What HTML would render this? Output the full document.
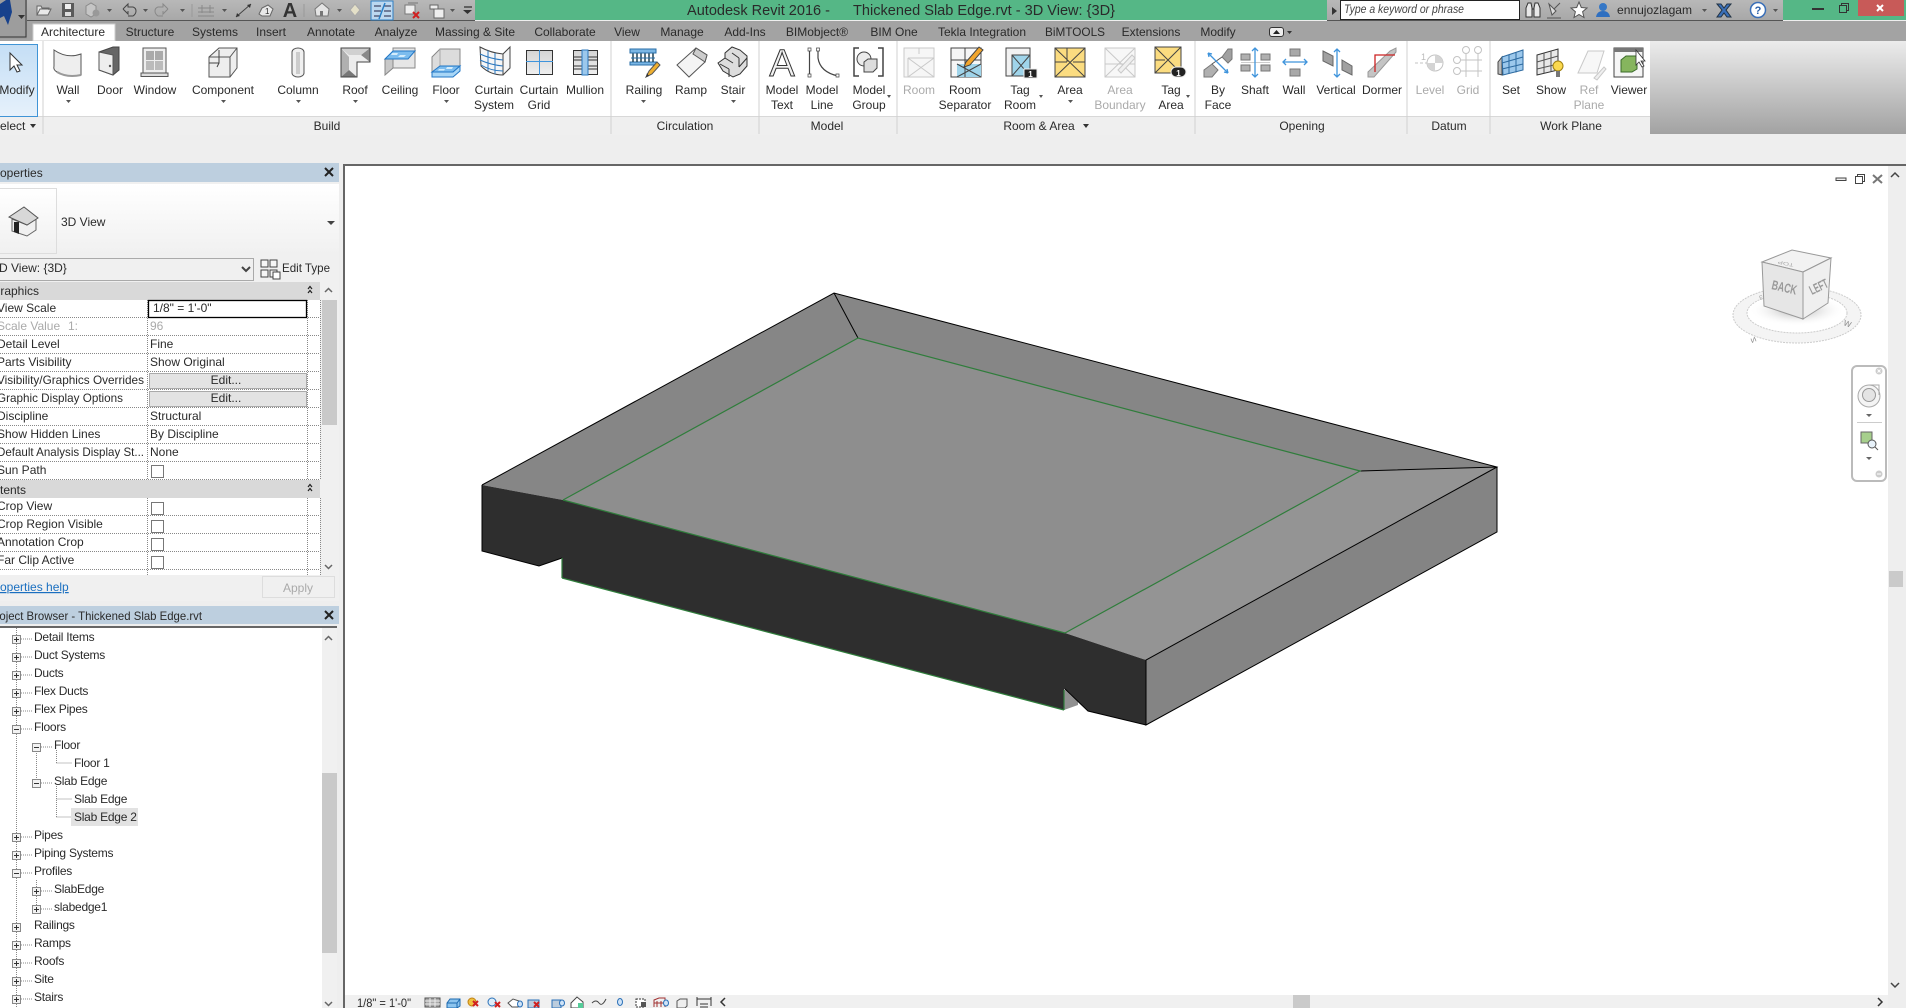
<!DOCTYPE html>
<html><head><meta charset="utf-8"><title>Autodesk Revit 2016</title>
<style>
html,body{margin:0;padding:0;width:1906px;height:1008px;overflow:hidden;background:#eee}
svg{display:block;position:absolute;left:0;top:0}
text{font-family:"Liberation Sans",sans-serif;font-size:12px;fill:#2a2a2a}
.m{text-anchor:middle}
.f{fill:#aaa}
.d{stroke:#888;stroke-width:1;stroke-dasharray:1 1;fill:none}
.b{fill:#f2f2f2;stroke:#666;stroke-width:1}
.c{fill:#fff;stroke:#777;stroke-width:1}
.i{fill:#eee;stroke:#555;stroke-width:1}
.l{fill:none;stroke:#444;stroke-width:1}
.s{fill:#555}
.e{fill:none;stroke:#000;stroke-width:1}
.g{fill:none;stroke:#2f7d3b;stroke-width:1.2}
.x{fill:none;stroke:#222;stroke-width:2}
.tree text{letter-spacing:-.25px}
</style></head><body>
<svg width="1906" height="1008" viewBox="0 0 1906 1008" xmlns="http://www.w3.org/2000/svg">
<defs>
<linearGradient id="gr" x1="0" y1="0" x2="0" y2="1"><stop offset="0" stop-color="#ececec"/><stop offset="1" stop-color="#a2a2a2"/></linearGradient>
<linearGradient id="qg" x1="0" y1="0" x2="0" y2="1"><stop offset="0" stop-color="#b8b8b8"/><stop offset="1" stop-color="#a8a8a8"/></linearGradient>
<linearGradient id="mg" x1="0" y1="0" x2="0" y2="1"><stop offset="0" stop-color="#c4def5"/><stop offset="1" stop-color="#e6f1fb"/></linearGradient>
<linearGradient id="tg" x1="0" y1="0" x2="0" y2="1"><stop offset="0" stop-color="#fff"/><stop offset="1" stop-color="#f0f0f0"/></linearGradient>
<linearGradient id="gg" x1="0" y1="0" x2="0" y2="1"><stop offset="0" stop-color="#d4d4d4"/><stop offset="1" stop-color="#efefef"/></linearGradient>
<radialGradient id="sh"><stop offset="0" stop-color="#aaa"/><stop offset="1" stop-color="#fff" stop-opacity="0"/></radialGradient>
</defs>
<rect width="1906" height="1008" fill="#eeeeee"/>

<!-- title bar -->
<rect width="1906" height="20" fill="#55b786"/>
<rect x="26" y="0" width="449" height="20" fill="url(#qg)"/>
<rect x="26" y="20" width="449" height="1" fill="#555"/>
<rect x="1327" y="0" width="456" height="20" fill="url(#qg)"/>
<rect x="1327" y="20" width="456" height="1" fill="#555"/>
<rect x="0" y="21" width="1906" height="20" fill="#a3a3a3"/>
<rect x="0" y="0" width="27" height="39" fill="#9d9d9d"/>
<path d="M26 0V37H0" fill="none" stroke="#333"/>
<path d="M0 4L6 0H10L12 12L8 25L4 16L0 18Z" fill="#17418c"/>
<path d="M18 15h7l-3.500 4z" fill="#333"/>

<!-- QAT icons -->
<path d="M37 15V6h4l1 2h7v2M37 15l3-6h11l-3 6z" fill="#e8e8e8" stroke="#666"/>
<path d="M62 3h12v14H62z" fill="#5a5a5a"/><rect x="65" y="4" width="6" height="5" fill="#eee"/><rect x="65" y="12" width="6" height="4" fill="#ddd"/>
<path d="M86 6l5-3 5 3v8l-5 3-5-3z" fill="#c5c5c5" stroke="#8a8a8a"/><circle cx="96" cy="13" r="3.500" fill="#999"/>
<path d="M107 9h5l-2.500 3z" class="s"/>
<path d="M123 9l5-5v3h5q3 1 3 4t-3 5h-5" class="l" stroke-width="1.300"/><path d="M123 9l5 5v-3" class="l"/>
<path d="M143 9h5l-2.500 3z" class="s"/>
<path d="M168 9l-5-5v3h-5q-3 1-3 4t3 5h5" fill="none" stroke="#888"/><path d="M168 9l-5 5v-3" fill="none" stroke="#888"/>
<path d="M180 9h5l-2.500 3z" class="s"/>
<path d="M192 4v13" stroke="#999"/>
<path d="M198 8h16M198 12h16M198 16h16M202 5v8M210 5v8" fill="none" stroke="#888"/>
<path d="M222 9h5l-2.500 3z" class="s"/>
<path d="M236 17L251 4" stroke="#444"/><path d="M236 17l1-4 3 3zM251 4l-4 1 3 3z" fill="#333"/>
<path d="M259 14l3-6 6-3 5 4-3 7h-8z" fill="#e8e8e8" stroke="#666"/><text x="265" y="14" style="font-size:8px">1</text>
<text x="290" y="17" class="m" style="font-size:20px;font-weight:bold;fill:#333">A</text>
<path d="M304 4v13" stroke="#999"/>
<path d="M315 9l7-6 7 6-1 7h-12z" fill="#e4e4e4" stroke="#777"/><path d="M320 16v-5h3v5" fill="#777"/>
<path d="M337 9h5l-2.500 3z" class="s"/>
<path d="M355 4l5 6-5 6-5-6z" fill="#e4e0c8" stroke="#aaa"/>
<rect x="371" y="1" width="22" height="19" fill="#bcd8f0" stroke="#2f7fc4"/>
<path d="M374 6h7M374 11h7M374 16h7M384 6h7M384 11h7M384 16h7" stroke="#224" /><path d="M385 3l-6 16" stroke="#2a80c8" stroke-width="1.500"/>
<path d="M405 5h10v9h-10z" fill="#eee" stroke="#777"/><path d="M408 3h10" stroke="#777"/><path d="M413 12l6 6M419 12l-6 6" stroke="#d02020" stroke-width="2"/>
<path d="M430 5h8v4h-8zM434 9h10v9h-10z" fill="#eee" stroke="#666"/>
<path d="M450 9h5l-2.500 3z" class="s"/>
<path d="M464 7h8" stroke="#333" stroke-width="1.300"/><path d="M463 10h9l-4.500 4z" fill="#333"/>

<text x="687" y="15" style="font-size:15px" textLength="143" lengthAdjust="spacingAndGlyphs">Autodesk Revit 2016 -</text>
<text x="853" y="15" style="font-size:15px" textLength="262" lengthAdjust="spacingAndGlyphs">Thickened Slab Edge.rvt - 3D View: {3D}</text>

<!-- search / info -->
<path d="M1332 7l5 4-5 4z" fill="#333"/>
<rect x="1340.500" y="0.500" width="179" height="19" fill="#fff" stroke="#222"/>
<text x="1344" y="13" style="font-size:11.500px;font-style:italic;fill:#444" textLength="120" lengthAdjust="spacingAndGlyphs">Type a keyword or phrase</text>
<path d="M1526 17V8l2-5h3l1 5v9zM1534 17V8l1-5h3l2 5v9zM1532 9h2" fill="#e8e8e8" stroke="#333"/>
<path d="M1549 4l7 7-4 4z M1554 9l6-6M1547 18h14" fill="#ddd" stroke="#555"/>
<path d="M1579 2l2.300 5.500 5.700.5-4.400 3.700 1.400 5.800-5-3-5 3 1.400-5.800-4.400-3.700 5.700-.5z" fill="#fff" stroke="#555"/>
<circle cx="1603" cy="7" r="4" fill="#3577c6"/><path d="M1596 17q1-6 7-6t7 6z" fill="#2f6fc0"/>
<text x="1617" y="14" style="font-size:12px" textLength="75" lengthAdjust="spacingAndGlyphs">ennujozlagam</text>
<path d="M1702 9h5l-2.500 3z" class="s"/>
<path d="M1717 4h4l3 4 3-4h4l-5 6 5 7h-4l-3-4-3 4h-4l5-7z" fill="#3a6fb8" stroke="#234"/>
<circle cx="1758" cy="10" r="7.500" fill="#fff" stroke="#3a6fb8" stroke-width="1.500"/><text x="1758" y="14" class="m" style="font-size:11px;font-weight:bold;fill:#2a5fa8">?</text>
<path d="M1773 9h5l-2.500 3z" class="s"/>
<rect x="1812" y="8" width="12" height="2" fill="#333"/>
<path d="M1839.500 5.500h7v7h-7zM1841.500 5.500v-2h7v7h-2" fill="none" stroke="#333"/>
<rect x="1858" y="0" width="46" height="16" fill="#c85a58"/>
<path d="M1877 5l6 6M1883 5l-6 6" stroke="#fff" stroke-width="2"/>

<!-- tabs -->
<path d="M33 41V24h82v17z" fill="#fff" stroke="#ccc"/>
<g class="tabs">
<text x="73" y="36" class="m">Architecture</text>
<text x="150" y="36" class="m">Structure</text>
<text x="215" y="36" class="m">Systems</text>
<text x="271" y="36" class="m">Insert</text>
<text x="331" y="36" class="m">Annotate</text>
<text x="396" y="36" class="m">Analyze</text>
<text x="475" y="36" class="m">Massing &amp; Site</text>
<text x="565" y="36" class="m">Collaborate</text>
<text x="627" y="36" class="m">View</text>
<text x="682" y="36" class="m">Manage</text>
<text x="745" y="36" class="m">Add-Ins</text>
<text x="817" y="36" class="m">BIMobject®</text>
<text x="894" y="36" class="m">BIM One</text>
<text x="982" y="36" class="m" textLength="88" lengthAdjust="spacingAndGlyphs">Tekla Integration</text>
<text x="1075" y="36" class="m" textLength="60" lengthAdjust="spacingAndGlyphs">BiMTOOLS</text>
<text x="1151" y="36" class="m">Extensions</text>
<text x="1218" y="36" class="m">Modify</text>
</g>
<rect x="1269.500" y="27.500" width="14" height="9" rx="2.500" fill="#eee" stroke="#333"/><path d="M1273 34l3.500-4 3.500 4z" fill="#222"/>
<path d="M1287 31h5l-2.500 3z" fill="#333"/>

<!-- ribbon -->
<rect x="0" y="41" width="1650" height="76" fill="#fff"/>
<rect x="0" y="117" width="1650" height="18" fill="#efefef"/>
<rect x="1650" y="41" width="256" height="93" fill="url(#gr)"/>
<rect x="0" y="116" width="1650" height="1" fill="#d8d8d8"/>
<g stroke="#d0d0d0">
<path d="M43 41v93M611 41v93M759 41v93M897 41v93M1195 41v93M1407 41v93M1490 41v93"/>
</g>
<rect x="-1" y="44.500" width="38.500" height="72" fill="url(#mg)" stroke="#3f94d6"/>
<path d="M10 53v17l4-4 3 6 3-1-3-6h5z" fill="#fff" stroke="#333"/>

<!-- Build icons -->
<path d="M54 50q13 9 27 4v21q-14 3-24-3q-4-2-3-6z" class="i"/><path d="M57 72q10 6 24 3" fill="none" stroke="#999" stroke-width="2"/>
<path d="M99 52l14-5h6v23l-6 5-14-5z" fill="#666" stroke="#444"/><path d="M99 52l14 3v20l-14-5z" class="i"/><circle cx="110" cy="66" r="1.200" fill="#555"/>
<rect x="143" y="48" width="23" height="25" class="i"/><rect x="146" y="51" width="8" height="9" fill="#aaa"/><rect x="155" y="51" width="8" height="9" fill="#aaa"/><rect x="146" y="61" width="8" height="9" fill="#bbb"/><rect x="155" y="61" width="8" height="9" fill="#bbb"/><rect x="141" y="73" width="27" height="3.500" fill="#ddd" stroke="#555"/>
<path d="M209 57l10-9h18v20l-7 9h-21zM209 57h21v20M230 57l7-9" class="i"/><path d="M219 50v13h-10M219 63l-2 4" class="l"/>
<rect x="292" y="48" width="12" height="29" rx="6" ry="4" fill="#f0f0f0" stroke="#555"/><rect x="296" y="52" width="4" height="22" fill="#ccc"/>

<path d="M341 48H370V62H357V77H341Z" fill="#ececec" stroke="#444"/>
<path d="M341 48L349 57V70L341 77Z" fill="#b0b0b0"/><path d="M341 77L349 70L357 77Z" fill="#777"/><path d="M370 48V62L361 55Z" fill="#888"/><path d="M341 48H370L361 55H349Z" fill="#d0d0d0"/>
<path d="M341 48H370V62H357V77H341Z" fill="none" stroke="#444"/>

<path d="M393 48H415V68H393Z" fill="#e6e6e6" stroke="#888"/>
<path d="M385 59V75L393 68V52Z" fill="#c8c8c8" stroke="#888"/>
<path d="M385 59L393 51H415L408 59Z" fill="#7cbcee" stroke="#2277c6"/><path d="M392 53h6l-1 2h-6zM400 55h6l-2 2h-6z" fill="#d4ecfb"/>

<path d="M432 57L440 49H460V66H440L432 73Z" fill="#dcdcdc" stroke="#888"/><path d="M440 49V66" stroke="#aaa"/>
<path d="M432 72L440 66H460L453 72Z" fill="#7cbcee" stroke="#2277c6"/><path d="M432 72V77H453L460 71V66L453 72Z" fill="#a8d6f6" stroke="#2277c6"/><path d="M439 69h6l-1 1.500h-6zM447 67h6l-1 2h-6z" fill="#d4ecfb"/>

<path d="M480 47Q491 53 503 54L510 47V68L503 75Q490 75 481 66Z" fill="#f6f6f6"/>
<path d="M480 47Q491 53 503 54V75Q490 75 481 66ZM503 54L510 47V68L503 75" fill="none" stroke="#444"/>
<path d="M488 50.500V71M495 53V74M480 54Q491 59 503 60M480 60Q491 65 503 66M481 65Q491 71 503 71" fill="none" stroke="#2d78be"/>

<rect x="526.500" y="50.500" width="26" height="24" fill="url(#gg)" stroke="#333"/><path d="M539.500 50v25M526 61.500h27" stroke="#3f94dc"/>

<rect x="573.500" y="50.500" width="24" height="24" fill="url(#gg)" stroke="#333"/><path d="M573 57h25M573 60h25M573 66h25M573 69h25" stroke="#333"/><rect x="582" y="50" width="6" height="25" fill="#9cc8ec" stroke="#2d78be"/>

<!-- Circulation -->
<path d="M630 49h26v4h-26zM630 62h26v3h-26z" fill="#7ab6e4" stroke="#2a6fa8"/><path d="M633 53v9M637 53v9M641 53v9M645 53v9M649 53v9M653 53v9" stroke="#245" stroke-width="1.500"/><path d="M631 53h24M631 58h24" stroke="#2a6fa8"/>
<path d="M646 77l3-6 8-9 3 3-8 9z" fill="#f0b030" stroke="#555"/><path d="M646 77l1-4 2 3z" fill="#333"/>
<path d="M677 65l19-17 11 7-2 7-16 15z" fill="#f4f4f4" stroke="#555"/><path d="M696 48l11 7-2 7-12-8z" fill="#ccc" stroke="#555"/>
<path d="M718 63l7-5v-5l7-6 8 3 7 6v10l-7 8-7 3-10-6z" fill="#ddd" stroke="#333"/><path d="M725 58l8 5M732 53l7 5M720 64l9 5M729 69v8M739 58v9M747 58l-8 9" fill="none" stroke="#333"/>

<!-- Model -->
<text x="782" y="76" class="m" style="font-size:38px;fill:#f2f2f2;stroke:#333;stroke-width:1">A</text>
<path d="M809.500 50V75M818 50V58Q820 72 838 76" fill="none" stroke="#444" stroke-width="1.200"/><path d="M808 48h3v3h-3zM808 74h3v3h-3zM816.500 48h3v3h-3zM836 74h3v3h-3z" fill="#fff" stroke="#444" stroke-width=".7"/>
<path d="M859 48h-5v28h5M878 48h5v28h-5" fill="none" stroke="#444" stroke-width="1.500"/><circle cx="864" cy="59" r="7" fill="#ececec" stroke="#444"/><path d="M864 62l4-3h9v9l-4 4h-9z" fill="#ddd" stroke="#444"/>

<!-- Room & Area -->
<g opacity=".45"><rect x="904" y="48" width="30" height="29" fill="#ececec" stroke="#888"/><path d="M919 48v6M908 58h26M908 58v19M908 58l26 19M934 58l-26 19" fill="none" stroke="#888"/></g>
<rect x="951" y="48" width="30" height="29" fill="#f6f6f6" stroke="#444"/><rect x="957" y="64" width="24" height="13" fill="#9fd4ea"/><path d="M965 48v29M951 60h30M957 64l24 13M981 64l-24 13" fill="none" stroke="#444"/><path d="M966 62l13-15 4 3-13 15-6 2z" fill="#f2a52b" stroke="#444"/>
<rect x="1006" y="48" width="24" height="28" fill="#f2f2f2" stroke="#444"/><rect x="1012" y="55" width="18" height="21" fill="#9fd4ea" stroke="#444"/><path d="M1012 55l18 21M1030 55l-18 21" stroke="#444"/><rect x="1024" y="69" width="13" height="9" fill="#222" stroke="#eee"/><text x="1030.500" y="77" class="m" style="font-size:8px;font-weight:bold;fill:#fff">1</text>
<rect x="1055" y="48" width="30" height="29" fill="#fbdc80" stroke="#444"/><path d="M1055 48l30 29M1085 48l-30 29M1055 62h12M1073 62h12M1067 48v14" fill="none" stroke="#444"/>
<g opacity=".45"><rect x="1105" y="48" width="30" height="29" fill="#eee" stroke="#888"/><path d="M1105 48l30 29M1135 48l-30 29M1105 64h30" fill="none" stroke="#888"/><path d="M1118 70l14-15 3 3-14 15z" fill="#ddd" stroke="#888"/></g>
<rect x="1155" y="47" width="26" height="26" fill="#fbdc80" stroke="#444"/><path d="M1155 47l26 26M1181 47l-26 26M1155 60h10" stroke="#444"/><rect x="1171" y="67" width="15" height="10" rx="5" fill="#222" stroke="#eee"/><text x="1178.500" y="76" class="m" style="font-size:8px;font-weight:bold;fill:#fff">1</text>

<!-- Opening -->
<path d="M1222 57L1228 49H1232V59L1228 63Z" fill="#a0a0a0" stroke="#777"/><path d="M1204 70L1212 64L1218 70L1212 77H1204Z" fill="#b0b0b0" stroke="#777"/><path d="M1222 57L1212 64" stroke="#555"/>
<path d="M1208 53L1228 73M1208 53l1 4M1208 53l4 1M1228 73l-1-4M1228 73l-4-1" fill="none" stroke="#3f94dc" stroke-width="1.300"/>
<rect x="1241" y="54" width="9" height="6" fill="#b0b0b0" stroke="#777"/><rect x="1241" y="65" width="9" height="6" fill="#b0b0b0" stroke="#777"/><rect x="1261" y="54" width="9" height="6" fill="#b0b0b0" stroke="#777"/><rect x="1261" y="65" width="9" height="6" fill="#b0b0b0" stroke="#777"/><path d="M1241 62.500h29" stroke="#ccc"/><path d="M1255 48v29M1252 51l3-3 3 3M1252 74l3 3 3-3" fill="none" stroke="#3f94dc" stroke-width="1.300"/>
<rect x="1290" y="49" width="10" height="7" fill="#a8a8a8" stroke="#777"/><rect x="1290" y="69" width="10" height="7" fill="#a8a8a8" stroke="#777"/><path d="M1283 62h24M1286 59l-3 3 3 3M1304 59l3 3-3 3" fill="none" stroke="#3f94dc" stroke-width="1.300"/>
<path d="M1323 51l10 5v10l-10-5zM1342 60l10 6v9l-10-5z" fill="#a0a0a0" stroke="#666"/><path d="M1337 49v28M1334 52l3-3 3 3M1334 74l3 3 3-3" fill="none" stroke="#3f94dc" stroke-width="1.300"/>
<path d="M1368 72L1390 51L1396 48V52L1374 77H1368Z" fill="#c4c4c4" stroke="#999"/><path d="M1395 55H1375V72" fill="none" stroke="#c22" stroke-width="1.300"/>

<!-- Datum -->
<g opacity=".5"><path d="M1415 63h30" stroke="#888" stroke-dasharray="3 2"/><circle cx="1435" cy="63" r="8" fill="#fff" stroke="#888"/><path d="M1435 55a8 8 0 0 1 8 8h-8zM1435 63v8a8 8 0 0 1-8-8z" fill="#aaa"/><text x="1421" y="60" style="font-size:9px;fill:#777">1</text></g>
<g opacity=".5" fill="none" stroke="#888"><circle cx="1466" cy="50" r="3.500"/><circle cx="1478" cy="50" r="3.500"/><circle cx="1457" cy="60" r="3.500"/><circle cx="1457" cy="71" r="3.500"/><path d="M1466 54v23M1478 54v23M1461 60h21M1461 71h21"/></g>

<!-- Work plane -->
<path d="M1498 62l4-5v18l-4-1z" fill="#bbb" stroke="#444"/>
<path d="M1502 57l21-7v20l-20 5z" fill="#9cc8ec" stroke="#2d6aa0"/><path d="M1509 55v19M1516 52.500v20M1502 63l21-6M1502 69l21-5" stroke="#2d6aa0" fill="none"/>
<path d="M1537 55l21-6v21l-21 5z" fill="#e8e8e8" stroke="#333"/><path d="M1544 53v20M1551 51v21M1537 62l21-6M1537 69l21-5" stroke="#555" fill="none"/><circle cx="1558" cy="66" r="5" fill="#fbd94e" stroke="#a08010"/><rect x="1556" y="71" width="4" height="6" fill="#777"/>
<g opacity=".45"><path d="M1578 73l10-22 16 0-7 22z" fill="#eee" stroke="#888"/><path d="M1594 78l10-11 2 2-9 11z" fill="#ddd" stroke="#888"/></g>
<rect x="1614" y="48" width="29" height="29" fill="#f6f6f6" stroke="#444"/><rect x="1614" y="48" width="29" height="4" fill="#777"/><path d="M1621 60l5-4h11v13l-5 3h-11z" fill="#86b55e" stroke="#3a6a2a"/><path d="M1636 50v15l3-3 3 5 2-1-3-5h4z" fill="#fff" stroke="#333" stroke-width=".8"/>

<!-- ribbon labels -->
<g>
<text x="17" y="94" class="m">Modify</text>
<text x="68" y="94" class="m">Wall</text>
<text x="110" y="94" class="m">Door</text>
<text x="155" y="94" class="m">Window</text>
<text x="223" y="94" class="m">Component</text>
<text x="298" y="94" class="m">Column</text>
<text x="355" y="94" class="m">Roof</text>
<text x="400" y="94" class="m">Ceiling</text>
<text x="446" y="94" class="m">Floor</text>
<text x="494" y="94" class="m">Curtain</text><text x="494" y="109" class="m">System</text>
<text x="539" y="94" class="m">Curtain</text><text x="539" y="109" class="m">Grid</text>
<text x="585" y="94" class="m">Mullion</text>
<text x="644" y="94" class="m">Railing</text>
<text x="691" y="94" class="m">Ramp</text>
<text x="733" y="94" class="m">Stair</text>
<text x="782" y="94" class="m">Model</text><text x="782" y="109" class="m">Text</text>
<text x="822" y="94" class="m">Model</text><text x="822" y="109" class="m">Line</text>
<text x="869" y="94" class="m">Model</text><text x="869" y="109" class="m">Group</text>
<text x="919" y="94" class="m f">Room</text>
<text x="965" y="94" class="m">Room</text><text x="965" y="109" class="m">Separator</text>
<text x="1020" y="94" class="m">Tag</text><text x="1020" y="109" class="m">Room</text>
<text x="1070" y="94" class="m">Area</text>
<text x="1120" y="94" class="m f">Area</text><text x="1120" y="109" class="m f">Boundary</text>
<text x="1171" y="94" class="m">Tag</text><text x="1171" y="109" class="m">Area</text>
<text x="1218" y="94" class="m">By</text><text x="1218" y="109" class="m">Face</text>
<text x="1255" y="94" class="m">Shaft</text>
<text x="1294" y="94" class="m">Wall</text>
<text x="1336" y="94" class="m">Vertical</text>
<text x="1382" y="94" class="m">Dormer</text>
<text x="1430" y="94" class="m f">Level</text>
<text x="1468" y="94" class="m f">Grid</text>
<text x="1511" y="94" class="m">Set</text>
<text x="1551" y="94" class="m">Show</text>
<text x="1589" y="94" class="m f">Ref</text><text x="1589" y="109" class="m f">Plane</text>
<text x="1629" y="94" class="m">Viewer</text>
</g>
<g class="s">
<path d="M66 100h5l-2.500 3zM221 100h5l-2.500 3zM296 100h5l-2.500 3zM353 100h5l-2.500 3zM444 100h5l-2.500 3zM641 100h5l-2.500 3zM731 100h5l-2.500 3zM1068 100h5l-2.500 3zM887 95h4l-2 3zM1039 95h4l-2 3zM1186 95h4l-2 3z"/>
</g>
<g>
<text x="-8" y="130">Select</text><path d="M30 124h6l-3 4z" fill="#333"/>
<text x="327" y="130" class="m">Build</text>
<text x="685" y="130" class="m">Circulation</text>
<text x="827" y="130" class="m">Model</text>
<text x="1039" y="130" class="m">Room &amp; Area</text><path d="M1083 124h6l-3 4z" fill="#333"/>
<text x="1302" y="130" class="m">Opening</text>
<text x="1449" y="130" class="m">Datum</text>
<text x="1571" y="130" class="m">Work Plane</text>
</g>

<!-- Properties -->
<rect x="0" y="163" width="339" height="19" fill="#bdcfdf"/>
<text x="-12" y="177">Properties</text>
<path d="M325 168l8 8M333 168l-8 8" class="x"/>
<rect x="0" y="182" width="339" height="394" fill="#f0f0f0"/>
<rect x="0" y="184" width="339" height="71" fill="url(#tg)"/>
<rect x="-1" y="188.500" width="57.500" height="65" fill="url(#tg)" stroke="#ddd"/>
<path d="M12 219L27 225L36 219V230L27 236L12 231Z" fill="#f0f0f0" stroke="#666"/>
<path d="M24 207L38 218L27 225L9 217Z" fill="#d8d8d8" stroke="#555"/>
<path d="M14 222h5v12l-5-2z" fill="#222"/>
<text x="61" y="226">3D View</text>
<path d="M327 221h8l-4 4z" fill="#444"/>
<rect x="-1" y="258.500" width="254.500" height="22" fill="#f0f0f0" stroke="#aaa"/>
<text x="-1" y="272">D View: {3D}</text>
<path d="M242 267l4 4 4-4" fill="none" stroke="#444" stroke-width="2"/>
<path d="M261 260h7v7h-7zM270 260h7v7h-7zM261 270h7v7h-7zM270 270h7v7h-7z" fill="#f6f6f6" stroke="#444"/>
<rect x="273" y="272" width="7" height="7" fill="#fff" stroke="#444"/>
<text x="282" y="272" textLength="48" lengthAdjust="spacingAndGlyphs">Edit Type</text>

<rect x="0" y="282" width="320" height="18" fill="#d9d9d9"/>
<text x="-9" y="295">Graphics</text>
<rect x="0" y="300" width="320" height="180" fill="#fff"/>
<rect x="0" y="480" width="320" height="18" fill="#d9d9d9"/>
<text x="-14" y="494">Extents</text>
<rect x="0" y="498" width="320" height="77" fill="#fff"/>
<path d="M308 289l2-2.500 2 2.500M308 293l2-2.500 2 2.500M308 487l2-2.500 2 2.500M308 491l2-2.500 2 2.500" fill="none" stroke="#222" stroke-width="1.200"/>
<rect x="322" y="282" width="15" height="293" fill="#f0f0f0"/>
<rect x="322" y="300" width="15" height="125" fill="#c9c9c9"/>
<path d="M325 292l3.500-3.500 3.500 3.500M325 565l3.500 3.500 3.500-3.500" fill="none" stroke="#666" stroke-width="1.500"/>
<g class="d">
<path d="M0 317.500H320M0 335.500H320M0 353.500H320M0 371.500H320M0 389.500H320M0 407.500H320M0 425.500H320M0 443.500H320M0 461.500H320M0 479.500H320M0 515.500H320M0 533.500H320M0 551.500H320M0 569.500H320"/>
<path d="M147.500 300V480M307.500 300V480M147.500 498V575M307.500 498V575M320.500 300V480M320.500 498V575"/>
</g>
<rect x="148.500" y="300.500" width="158" height="17" fill="#fff" stroke="#000" stroke-width="1.300"/>
<rect x="149.500" y="373.500" width="157" height="15" fill="#e3e3e3" stroke="#aaa"/>
<rect x="149.500" y="391.500" width="157" height="15" fill="#e3e3e3" stroke="#aaa"/>
<g transform="translate(0,-1)">
<text x="153" y="313">1/8" = 1'-0"</text>
<text x="-3" y="313">View Scale</text>
<text x="-3" y="331" class="f">Scale Value</text><text x="68" y="331" class="f">1:</text><text x="150" y="331" class="f">96</text>
<text x="-3" y="349">Detail Level</text><text x="150" y="349">Fine</text>
<text x="-3" y="367">Parts Visibility</text><text x="150" y="367">Show Original</text>
<text x="-3" y="385" textLength="147" lengthAdjust="spacingAndGlyphs">Visibility/Graphics Overrides</text>
<text x="-3" y="403" textLength="126" lengthAdjust="spacingAndGlyphs">Graphic Display Options</text>
<text x="-3" y="421">Discipline</text><text x="150" y="421">Structural</text>
<text x="-3" y="439">Show Hidden Lines</text><text x="150" y="439">By Discipline</text>
<text x="-3" y="457" textLength="147" lengthAdjust="spacingAndGlyphs">Default Analysis Display St...</text><text x="150" y="457">None</text>
<text x="-3" y="475">Sun Path</text>
<text x="-3" y="511">Crop View</text>
<text x="-3" y="529">Crop Region Visible</text>
<text x="-3" y="547">Annotation Crop</text>
<text x="-3" y="565">Far Clip Active</text>
<text x="226" y="385" class="m">Edit...</text><text x="226" y="403" class="m">Edit...</text>
</g>
<g class="c">
<rect x="151.500" y="465.500" width="12" height="12"/><rect x="151.500" y="502.500" width="12" height="12"/><rect x="151.500" y="520.500" width="12" height="12"/><rect x="151.500" y="538.500" width="12" height="12"/><rect x="151.500" y="556.500" width="12" height="12"/>
</g>
<rect x="0" y="575" width="339" height="26" fill="#f0f0f0"/>
<text x="-12" y="591" style="fill:#1a6fc0;text-decoration:underline">Properties help</text>
<rect x="262.500" y="576.500" width="72" height="21" fill="#f0f0f0" stroke="#ddd"/>
<text x="298" y="592" class="m f">Apply</text>

<!-- Project browser -->
<rect x="0" y="606" width="339" height="18" fill="#bdcfdf"/>
<text x="-12" y="620" textLength="214" lengthAdjust="spacingAndGlyphs">Project Browser - Thickened Slab Edge.rvt</text>
<path d="M325 611l8 8M333 611l-8 8" class="x"/>
<rect x="0" y="626" width="337" height="2" fill="#666"/>
<rect x="0" y="628" width="322" height="380" fill="#fff"/>
<rect x="322" y="628" width="15" height="380" fill="#f0f0f0"/>
<rect x="322" y="773" width="15" height="180" fill="#c9c9c9"/>
<path d="M325 640l3.500-3.500 3.500 3.500M325 1002l3.500 3.500 3.500-3.500" fill="none" stroke="#666" stroke-width="1.500"/>
<g class="d">
<path d="M16.500 628V1008M36.500 745V781M36.500 880V907M56.500 750V763M56.500 786V817"/>
<path d="M21 639h12M21 657h12M21 675h12M21 693h12M21 711h12M21 729h12M21 837h12M21 855h12M21 873h12M21 945h12M21 963h12M21 981h12M21 999h12M41 747h12M41 783h12M41 891h12M41 909h12M56.500 763h15M56.500 799h15M56.500 817h15"/>
</g>
<g fill="#f2f2f2" stroke="#888">
<rect x="12.500" y="635.500" width="8" height="8"/><rect x="12.500" y="653.500" width="8" height="8"/><rect x="12.500" y="671.500" width="8" height="8"/><rect x="12.500" y="689.500" width="8" height="8"/><rect x="12.500" y="707.500" width="8" height="8"/><rect x="12.500" y="725.500" width="8" height="8"/>
<rect x="32.500" y="743.500" width="8" height="8"/><rect x="32.500" y="779.500" width="8" height="8"/>
<rect x="12.500" y="833.500" width="8" height="8"/><rect x="12.500" y="851.500" width="8" height="8"/><rect x="12.500" y="869.500" width="8" height="8"/>
<rect x="32.500" y="887.500" width="8" height="8"/><rect x="32.500" y="905.500" width="8" height="8"/>
<rect x="12.500" y="923.500" width="8" height="8"/><rect x="12.500" y="941.500" width="8" height="8"/><rect x="12.500" y="959.500" width="8" height="8"/><rect x="12.500" y="977.500" width="8" height="8"/><rect x="12.500" y="995.500" width="8" height="8"/>
</g>
<path d="M14 639.500h5M16.500 637v5M14 657.500h5M16.500 655v5M14 675.500h5M16.500 673v5M14 693.500h5M16.500 691v5M14 711.500h5M16.500 709v5M14 729.500h5M34 747.500h5M34 783.500h5M14 837.500h5M16.500 835v5M14 855.500h5M16.500 853v5M14 873.500h5M34 891.500h5M36.500 889v5M34 909.500h5M36.500 907v5M14 927.500h5M16.500 925v5M14 945.500h5M16.500 943v5M14 963.500h5M16.500 961v5M14 981.500h5M16.500 979v5M14 999.500h5M16.500 997v5" stroke="#333" fill="none"/>
<rect x="71" y="808" width="67" height="18" fill="#e2e2e2"/>
<g class="tree">
<text x="34" y="641">Detail Items</text>
<text x="34" y="659">Duct Systems</text>
<text x="34" y="677">Ducts</text>
<text x="34" y="695">Flex Ducts</text>
<text x="34" y="713">Flex Pipes</text>
<text x="34" y="731">Floors</text>
<text x="54" y="749">Floor</text>
<text x="74" y="767">Floor 1</text>
<text x="54" y="785">Slab Edge</text>
<text x="74" y="803">Slab Edge</text>
<text x="74" y="821">Slab Edge 2</text>
<text x="34" y="839">Pipes</text>
<text x="34" y="857">Piping Systems</text>
<text x="34" y="875">Profiles</text>
<text x="54" y="893">SlabEdge</text>
<text x="54" y="911">slabedge1</text>
<text x="34" y="929">Railings</text>
<text x="34" y="947">Ramps</text>
<text x="34" y="965">Roofs</text>
<text x="34" y="983">Site</text>
<text x="34" y="1001">Stairs</text>
</g>

<!-- viewport -->
<rect x="345" y="166" width="1561" height="842" fill="#fff"/>
<rect x="343" y="164" width="1563" height="2" fill="#666"/>
<rect x="343" y="164" width="2" height="844" fill="#666"/>
<rect x="1888" y="166" width="18" height="842" fill="#eeeeee"/>
<rect x="1889" y="571" width="14" height="16" fill="#cacaca"/>
<path d="M1891 177l4-4 4 4" fill="none" stroke="#444" stroke-width="1.500"/>
<path d="M1891 983l4 4 4-4" fill="none" stroke="#444" stroke-width="1.500"/>
<rect x="345" y="995" width="1543" height="13" fill="#f0f0f0"/>
<rect x="1293" y="995" width="17" height="13" fill="#cacaca"/>
<path d="M725 998l-4 4 4 4M1878 998l4 4-4 4" fill="none" stroke="#333" stroke-width="1.500"/>
<text x="357" y="1007" textLength="54" lengthAdjust="spacingAndGlyphs">1/8" = 1'-0"</text>

<!-- status icons -->
<rect x="425" y="998" width="15" height="9" fill="#aaa" stroke="#555"/><path d="M425 1001h15M425 1004h15M430 998v9M435 998v9" stroke="#eee"/>
<path d="M447 1003l3-4h10v7l-3 2h-10z" fill="#8cc4ee" stroke="#1d6ab0"/><path d="M447 1003h10v5M457 1003l3-4" fill="none" stroke="#1d6ab0"/>
<circle cx="472" cy="1002" r="4" fill="#f0c040" stroke="#c08010"/><path d="M473 1001l5 5M478 1001l-5 5" stroke="#d02020" stroke-width="2"/>
<circle cx="492" cy="1002" r="4" fill="#ddeefa" stroke="#2a70b8"/><path d="M495 1002l5 5M500 1002l-5 5" stroke="#d02020" stroke-width="2"/>
<path d="M508 1003l5-4 6 2-1 6h-6z" fill="#fff" stroke="#555"/><ellipse cx="520" cy="1004" rx="2.500" ry="3" fill="#cfe3f7" stroke="#2a70b8"/>
<path d="M528 1000h11v8h-11z" fill="#bcd" stroke="#2a70b8"/><path d="M534 1002l5 5M539 1002l-5 5" stroke="#d02020" stroke-width="2"/>
<path d="M552 1000h9v8h-9z" fill="#bcd" stroke="#2a70b8"/><ellipse cx="562" cy="1003" rx="2.500" ry="3" fill="#cfe3f7" stroke="#2a70b8"/>
<path d="M571 1003l6-6 6 5v6h-12z" fill="#fff" stroke="#444"/><rect x="578" y="1003" width="5" height="5" fill="#5c9"/>
<path d="M592 1003q4-4 7 0t7-4" fill="none" stroke="#444"/>
<ellipse cx="620" cy="1002" rx="2.500" ry="3.500" fill="#cfe3f7" stroke="#2a70b8"/>
<rect x="636" y="999" width="9" height="8" fill="#fff" stroke="#333" stroke-dasharray="2 1"/><rect x="641" y="1002" width="5" height="5" fill="#555"/>
<path d="M654 1007v-7l5-2h6v9M657 1001v6M661 1001v6M654 1003h11" fill="none" stroke="#a03030"/><ellipse cx="666" cy="1003" rx="2.500" ry="3" fill="#cfe3f7" stroke="#2a70b8"/>
<path d="M677 1001l3-2h7v7l-2 2h-8z" fill="#eee" stroke="#555"/>
<path d="M697 997v9M711 997v9M697 999h14M700 1004h8M700 1007h8" fill="none" stroke="#333"/>

<!-- viewport icons -->
<rect x="1836" y="178" width="10" height="2.500" fill="#eee" stroke="#444"/>
<path d="M1855.500 176.500h7v7h-7zM1857.500 176.500v-2h7v7h-2" fill="none" stroke="#444"/>
<path d="M1873 175l9 8M1882 175l-9 8" stroke="#777" stroke-width="2" fill="none"/>

<!-- view cube -->
<ellipse cx="1797" cy="315" rx="64" ry="28" fill="#f4f4f4" stroke="#ccc" stroke-dasharray="2 1"/>
<ellipse cx="1797" cy="313" rx="50" ry="20" fill="#fff" stroke="#ccc" stroke-dasharray="2 1"/>
<ellipse cx="1797" cy="310" rx="48" ry="16" fill="url(#sh)"/>
<path d="M1762 262l30-12 39 8-28 14z" fill="#f2f2f2" stroke="#999"/>
<path d="M1762 262l41 10v47l-39-13z" fill="#e6e6e6" stroke="#999"/>
<path d="M1803 272l28-14-3 45-25 16z" fill="#efefef" stroke="#999"/>
<text x="0" y="0" transform="translate(1771 289) rotate(13) scale(.8 1.200)" style="font-size:11px;font-weight:bold;fill:#999">BACK</text>
<text x="0" y="0" transform="translate(1812 295) rotate(-26) scale(.7 1.200)" style="font-size:11px;font-weight:bold;fill:#999">LEFT</text>
<text x="0" y="0" transform="translate(1786 262) rotate(12) scale(-1 -.6)" style="font-size:8px;fill:#aaa;text-anchor:middle">TOP</text>
<text x="0" y="0" transform="translate(1750 339) rotate(-22) scale(1 -.8)" style="font-size:8px;fill:#888">N</text>
<text x="0" y="0" transform="translate(1843 325) rotate(20) scale(1 1)" style="font-size:8px;fill:#888">W</text>
<text x="0" y="0" transform="translate(1760 300) rotate(-20)" style="font-size:6px;fill:#aaa">E</text>

<!-- nav bar -->
<rect x="1852" y="366" width="34" height="115" rx="5" fill="#fff" stroke="#bbb" stroke-width="2"/>
<circle cx="1879" cy="371" r="3.500" fill="#ccc"/><path d="M1877.500 369.500l3 3M1880.500 369.500l-3 3" stroke="#fff"/>
<circle cx="1869" cy="396" r="11" fill="#f4f4f4" stroke="#aaa"/><circle cx="1869" cy="395" r="6.500" fill="#e4e4e4" stroke="#999"/><path d="M1869 385h10v10" fill="none" stroke="#aaa"/>
<path d="M1866 414h6l-3 3z" fill="#666"/>
<path d="M1857 422.500h25" stroke="#ccc"/>
<rect x="1861" y="432" width="11" height="11" fill="#a6cf8c" stroke="#666"/><circle cx="1872" cy="444" r="4" fill="#e8f2fa" stroke="#555"/><path d="M1875 447l3 3" stroke="#555"/>
<path d="M1866 457h6l-3 3z" fill="#666"/>
<circle cx="1879" cy="474" r="3.500" fill="#ccc"/><path d="M1877 474h4" stroke="#fff"/>

<!-- 3D model -->
<path d="M563 500L858 338L1360 471L1065 633Z" fill="#8e8e8e"/>
<path d="M482 485L834 293L858 338L563 500Z" fill="#868686"/>
<path d="M834 293L1497 467L1360 471L858 338Z" fill="#868686"/>
<path d="M1360 471L1497 467L1146 660L1065 633Z" fill="#949494"/>
<path d="M1146 660L1497 467V532L1146 725Z" fill="#848484"/>
<path d="M1064 689L1078 702L1078 705L1064 710Z" fill="#909090"/>
<path d="M482 485L563 500L1065 633L1146 660V725L1088 711L1065 689L1064 689V710L562 578V558L539 566L482 551Z" fill="#2e2e2e"/>
<path class="e" d="M482 485L834 293L1497 467L1146 660V725L1497 532V467M834 293L858 338M1360 471L1497 467M482 485V551L539 566L562 558M1146 725L1088 711L1065 689"/>
<path class="g" d="M563 500L858 338L1360 471L1065 633M1064 690V710"/>
<path class="g" d="M563 500L1065 633M562 578L1064 710M562 558V578" stroke-width="1.600"/>
</svg>
</body></html>
